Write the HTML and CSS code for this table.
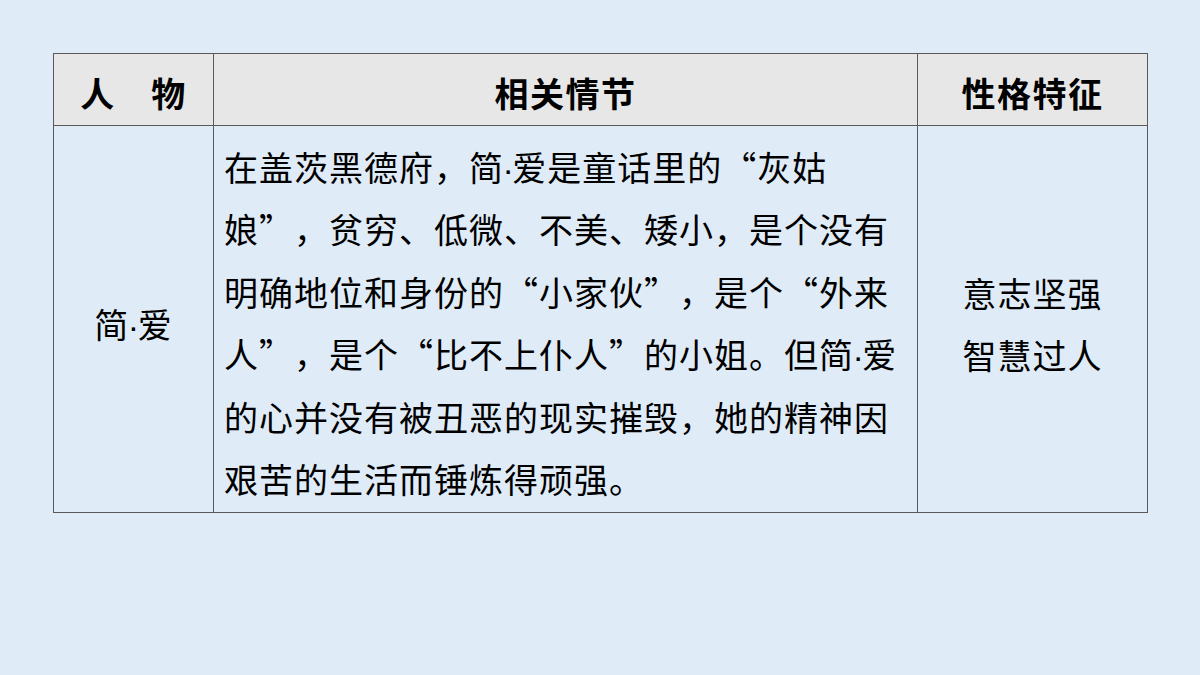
FILE: index.html
```html
<!DOCTYPE html>
<html lang="zh-CN">
<head>
<meta charset="utf-8">
<title>简·爱</title>
<link rel="stylesheet" href="styles.css">
</head>
<body>
<div class="page">
  <table class="grid">
    <colgroup>
      <col class="c1">
      <col class="c2">
      <col class="c3">
    </colgroup>
    <thead>
      <tr>
        <th>人　物</th>
        <th>相关情节</th>
        <th>性格特征</th>
      </tr>
    </thead>
    <tbody>
      <tr>
        <td class="name">简<span class="dot">·</span>爱</td>
        <td class="plot">在盖茨黑德府，简<span class="dot">·</span>爱是童话里的“灰姑<br>娘”，贫穷、低微、不美、矮小，是个没有<br>明确地位和身份的“小家伙”，是个“外来<br>人”，是个“比不上仆人”的小姐。但简<span class="dot">·</span>爱<br>的心并没有被丑恶的现实摧毁，她的精神因<br>艰苦的生活而锤炼得顽强。</td>
        <td class="trait">意志坚强<br>智慧过人</td>
      </tr>
    </tbody>
  </table>
</div>
</body>
</html>
```

FILE: styles.css
```css
html, body {
  margin: 0;
  padding: 0;
}
body {
  background: #dfebf7;
  font-family: "Noto Sans CJK SC", "Noto Sans", sans-serif;
  color: #000;
}
.page {
  width: 1200px;
  height: 675px;
  padding: 53px 0 0 53px;
  box-sizing: border-box;
}
.grid {
  border-collapse: collapse;
  table-layout: fixed;
  width: 1094px;
}
.c1 { width: 160px; }
.c2 { width: 704px; }
.c3 { width: 230px; }
.grid th, .grid td {
  border: 1px solid #5a5a5a;
  font-size: 34px;
  letter-spacing: 1px;
  line-height: 62.4px;
  text-spacing-trim: space-all;
}
.grid th {
  background: #e7e7e7;
  height: 72px;
  padding: 6px 0 0 0;
  box-sizing: border-box;
  font-weight: bold;
  text-align: center;
  vertical-align: middle;
  line-height: 40px;
  letter-spacing: 1.5px;
}
.grid td {
  padding: 10px 0 0 0;
  vertical-align: middle;
}
.name, .trait {
  text-align: center;
}
.plot {
  padding-left: 10px !important;
  padding-bottom: 2px !important;
  white-space: nowrap;
  text-align: left;
}
.dot {
  font-family: "Liberation Sans", sans-serif;
  letter-spacing: 0;
  line-height: 0;
  margin: 0 -1.5px;
}
```
